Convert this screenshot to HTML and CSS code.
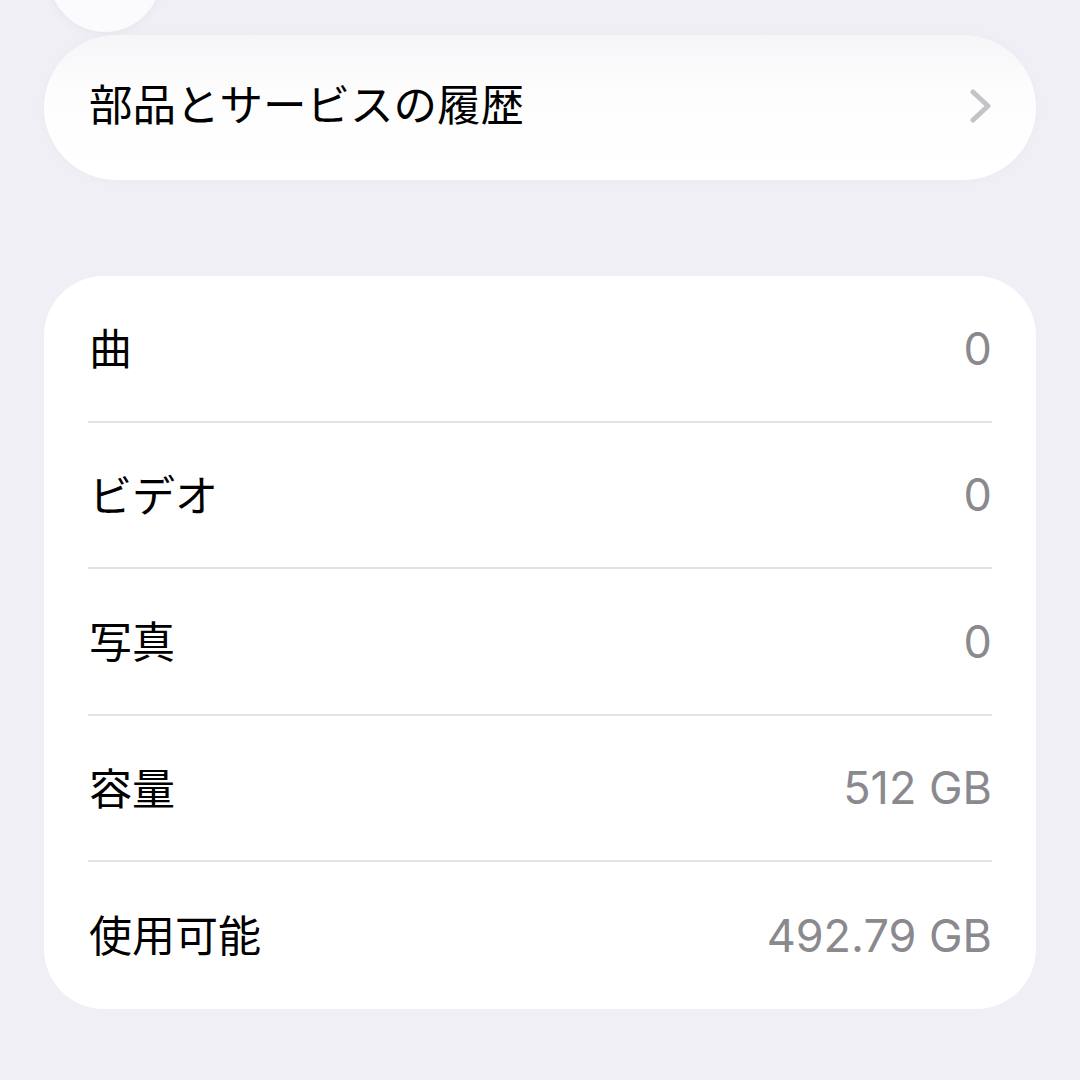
FILE: index.html
```html
<!DOCTYPE html>
<html lang="ja">
<head>
  <meta charset="UTF-8">
  <title>情報</title>
  <link rel="stylesheet" href="styles.css">
</head>
<body>

<div class="pagina">
  <div class="circulo"></div>

  <div class="tarjeta historial">
    <span class="titulo">部品とサービスの履歴</span>
    <svg class="chevron" width="22" height="34" viewBox="0 0 22 34">
      <path d="M3 3 L18 17 L3 31" fill="none" stroke="#c4c4c8" stroke-width="5" stroke-linecap="round" stroke-linejoin="round"/>
    </svg>
  </div>

  <div class="tarjeta lista">
    <div class="fila"><span class="nombre">曲</span><span class="valor">0</span></div>
    <div class="fila"><span class="nombre">ビデオ</span><span class="valor">0</span></div>
    <div class="fila"><span class="nombre">写真</span><span class="valor">0</span></div>
    <div class="fila"><span class="nombre">容量</span><span class="valor">512 GB</span></div>
    <div class="fila"><span class="nombre">使用可能</span><span class="valor">492.79 GB</span></div>
  </div>
</div>

</body>
</html>
```

FILE: styles.css
```css
* {
  margin: 0;
  padding: 0;
  box-sizing: border-box;
}

body {
  background: #f0eff5;
  overflow: hidden;
  color: #000;
  font-family: Inter, "Noto Sans CJK JP", sans-serif;
}

.pagina {
  padding: 0 44px;
}

.circulo {
  width: 112px;
  height: 112px;
  margin: -80px 0 0 5px;
  border-radius: 50%;
  background: #fbfbfd;
  box-shadow: 0 2px 10px rgba(0, 0, 0, 0.04);
}

.tarjeta {
  background: #fff;
}

.historial {
  margin-top: 3px;
  height: 145px;
  border-radius: 73px;
  display: flex;
  align-items: center;
  justify-content: space-between;
  padding: 0 44px 0 45px;
  background: linear-gradient(#f6f6f8, #fdfdfe 40%, #fff);
  box-shadow: 0 0 12px rgba(0, 0, 0, 0.025);
}

.titulo {
  font-size: 43.5px;
  margin-top: -10px;
}

.chevron {
  margin-top: -3px;
}

.lista {
  margin-top: 96px;
  border-radius: 60px;
  padding: 0 44px;
}

.fila {
  height: 146.5px;
  display: flex;
  align-items: center;
  justify-content: space-between;
  border-bottom: 2.5px solid #e3e3e6;
}

.fila:last-child {
  border-bottom: none;
}

.nombre {
  font-size: 43px;
  padding-left: 1px;
  margin-top: -4px;
}

.valor {
  font-size: 45px;
  color: #8a8a8e;
}
```
